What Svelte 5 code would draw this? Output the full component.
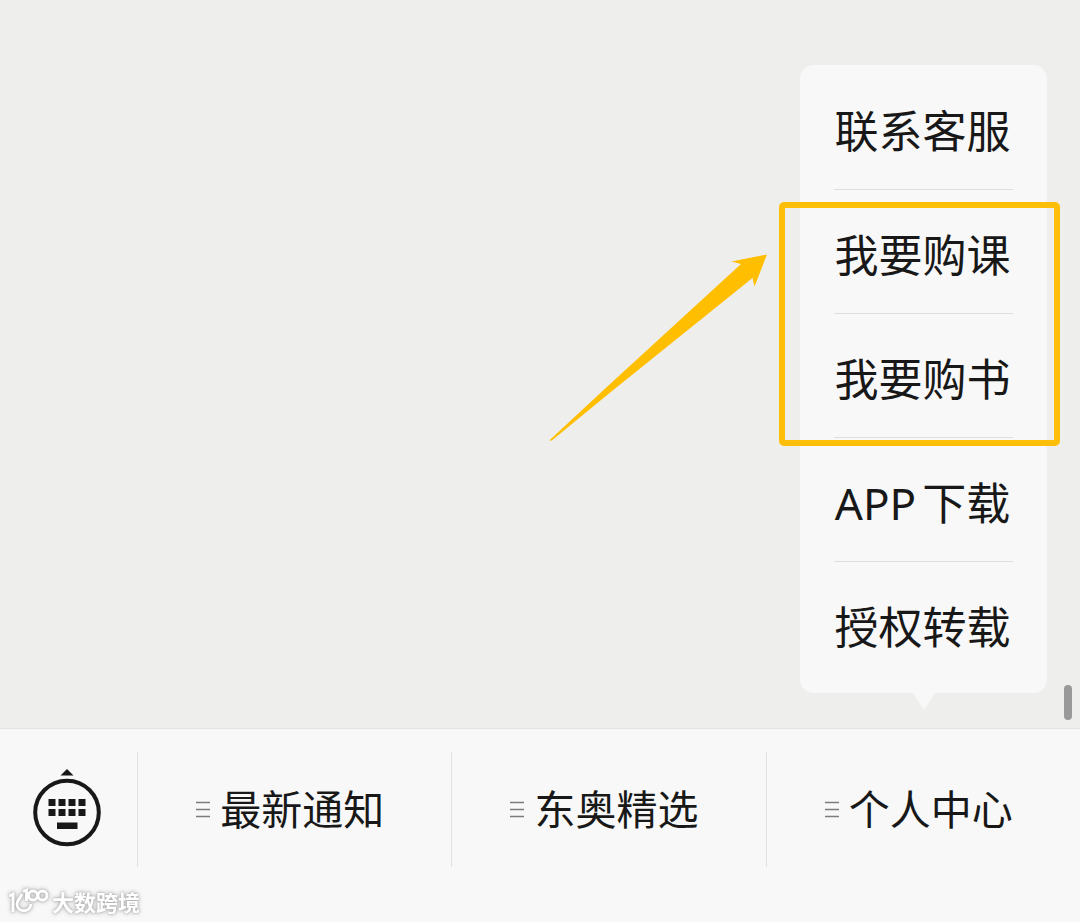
<script>
  // Entries of the opened sub menu
  const menuItems = [
    { prefix: '', text: '联系客服' },
    { prefix: '', text: '我要购课' },
    { prefix: '', text: '我要购书' },
    { prefix: 'APP', text: '下载' },
    { prefix: '', text: '授权转载' }
  ];

  const tabs = ['最新通知', '东奥精选', '个人中心'];

  let open = $state(true);

  // Only the last tab has a sub menu
  function toggle(index) {
    if (index === tabs.length - 1) open = !open;
  }
</script>

<div class="screen">
  <main class="chat">
    {#if open}
      <div class="popup">
        <ul class="menu">
          {#each menuItems as item}
            <li>
              <button class="menu-item">
                {#if item.prefix}<span>{item.prefix}</span>{/if}
                <span>{item.text}</span>
              </button>
            </li>
          {/each}
        </ul>
        <div class="highlight"></div>
        <svg class="arrow" viewBox="0 0 220 190" aria-hidden="true">
          <path d="M0.500 186.500Q1 185.500 4 183L60 131L192 10L182.500 7.500L218 0.500L205.500 32.500L203.500 24L63 137L4 185.500Q1.500 187.500 0.500 186.500Z" />
        </svg>
      </div>
    {/if}
    <div class="scrollbar"></div>
  </main>

  <footer class="bar">
    <button class="keyboard" aria-label="键盘">
      <svg viewBox="0 0 68 78" width="68" height="78">
        <path d="M34 0L40.500 6.500H27.500Z" />
        <circle cx="34" cy="43.500" r="31.800" fill="none" stroke="#181818" stroke-width="4" />
        {#each [30, 40] as y}
          {#each [15.5, 25.5, 35.5, 45.5] as x}
            <rect {x} {y} width="7" height="7" />
          {/each}
        {/each}
        <rect x="24" y="53.500" width="20.500" height="6.500" />
      </svg>
    </button>
    <nav class="tabs">
      {#each tabs as tab, i}
        <button class="tab" onclick={() => toggle(i)}>
          <svg viewBox="0 0 14 18" width="14" height="18" aria-hidden="true">
            <path d="M0 2.500H14M0 9.500H14M0 16.500H14" stroke="#7c7c7c" stroke-width="1.600" />
          </svg>
          <span>{tab}</span>
        </button>
      {/each}
    </nav>
    <div class="watermark">
      <svg viewBox="0 0 40 30" width="40" height="30" aria-hidden="true">
        <g fill="none" stroke="#fff" stroke-width="2.800">
          <path d="M0 9L4 7V25" />
          <path d="M13 7C11 12 8 13 8 17C8 26 21 26 22 17" />
          <path d="M14 4.500L17.500 3V14" />
          <circle cx="24" cy="8.500" r="4.500" />
          <circle cx="33.500" cy="8.500" r="4.500" />
        </g>
      </svg>
      <span>大数跨境</span>
    </div>
  </footer>
</div>

<style>
  :global(body) {
    margin: 0;
  }

  .screen {
    display: flex;
    flex-direction: column;
    min-height: 100vh;
    background: #eeeeec;
    color: #181818;
    font-family: "Noto Sans", "Noto Sans CJK SC", sans-serif;
  }

  button {
    margin: 0;
    padding: 0;
    border: 0;
    background: none;
    color: inherit;
    font: inherit;
    cursor: pointer;
  }

  .chat {
    position: relative;
    flex: 1;
    min-height: 700px;
  }

  /* Sub menu floating over the chat */
  .popup {
    position: absolute;
    right: 33px;
    bottom: 35px;
    border-radius: 14px;
    background: #f8f8f8;
  }

  .popup::after {
    content: "";
    position: absolute;
    top: 100%;
    left: 50%;
    margin-left: -11px;
    border: 11px solid transparent;
    border-top: 17px solid #f8f8f8;
    border-bottom: 0;
  }

  .menu {
    margin: 0;
    padding: 1px 34px 8px;
    list-style: none;
  }

  .menu li + li {
    border-top: 1px solid #dedede;
  }

  .menu-item {
    display: flex;
    justify-content: center;
    align-items: center;
    gap: 6px;
    min-width: 179px;
    height: 123px;
    padding: 6px 2px 0 0;
    font-size: 44px;
    line-height: 60px;
    white-space: nowrap;
  }

  .highlight {
    position: absolute;
    top: 137px;
    left: -21px;
    right: -13px;
    height: 232px;
    border: 6px solid #ffbe0a;
    border-radius: 5px;
    pointer-events: none;
  }

  .arrow {
    position: absolute;
    top: 189px;
    left: -251px;
    width: 220px;
    height: 190px;
    fill: #ffbe00;
    pointer-events: none;
  }

  .scrollbar {
    position: absolute;
    right: 8px;
    bottom: 8px;
    width: 8px;
    height: 35px;
    border-radius: 4px;
    background: #999;
  }

  .bar {
    position: relative;
    display: flex;
    padding: 23px 0 55px;
    border-top: 1px solid #e2e2e2;
    background: #f8f8f8;
  }

  .keyboard {
    display: flex;
    justify-content: center;
    width: 137px;
    padding: 17px 3px 0 0;
    box-sizing: border-box;
  }

  .keyboard svg {
    fill: #181818;
  }

  .tabs {
    display: flex;
    flex: 1;
  }

  .tab {
    display: flex;
    flex: 1;
    justify-content: center;
    align-items: center;
    gap: 10px;
    height: 115px;
    padding: 0 9px 2px 0;
    border-left: 1px solid #e2e2e2;
    font-size: 41px;
    line-height: 56px;
    white-space: nowrap;
  }

  .watermark {
    position: absolute;
    left: 9px;
    bottom: 5px;
    display: flex;
    align-items: center;
    gap: 3px;
    color: #fff;
    font-size: 22px;
    font-weight: 700;
    line-height: 30px;
    filter: drop-shadow(0 0 1px #aaa) drop-shadow(0 0 2px #bbb);
  }
</style>
